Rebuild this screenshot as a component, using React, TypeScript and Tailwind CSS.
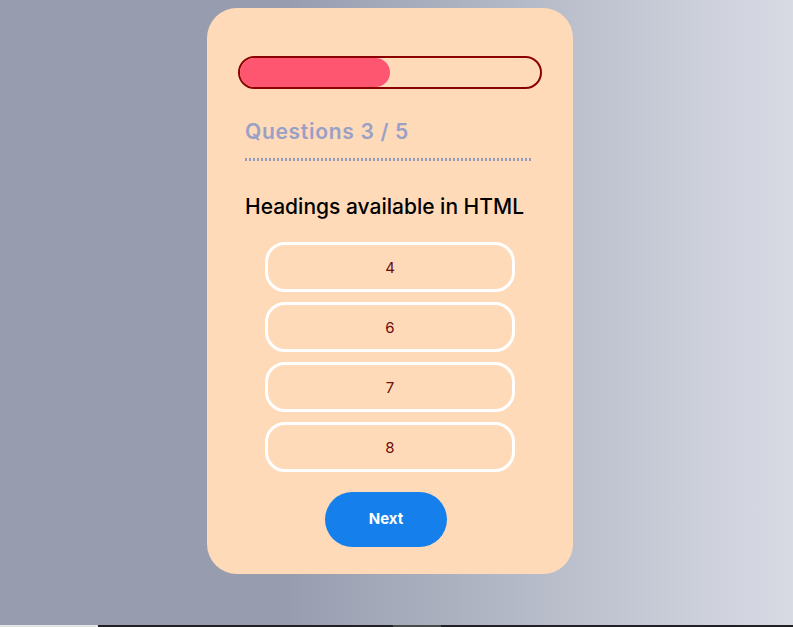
import React from "react";

const options = ["4", "6", "7", "8"];

export default function App() {
  return (
    <div className="flex h-[627px] w-[793px] flex-col overflow-hidden" style={{ fontFamily: "Inter, 'Open Sans', sans-serif" }}>
      <div className="h-[625px] w-full bg-[linear-gradient(to_right,#979daf_36%,#d8dbe4_100%)]">
        <div className="flex w-[780px] justify-center pt-2">
          <div className="flex h-[566px] w-[366px] flex-col rounded-[30px] bg-[#ffdab9] px-[31px] pt-[48px]">
            <div className="h-[33px] w-full rounded-full border-2 border-[#8b0000]">
              <div className="h-full w-[150px] rounded-full bg-[#fe5570]" />
            </div>
            <div className="ml-[7px] mt-[30px] w-[286px]">
              <div className="pb-[13px] text-[21px] font-semibold leading-[26px] tracking-[0.7px] text-[#98a0c6]">
                Questions 3 / 5
              </div>
              <div className="h-[3px] w-[286px] bg-[repeating-linear-gradient(to_right,#929bc2_0px,#929bc2_2px,transparent_2px,transparent_4px)]" />
            </div>
            <div className="ml-[7px] mt-[33px] text-[21px] font-medium leading-[26px] text-black">
              Headings available in HTML
            </div>
            <div className="mt-[22px] flex flex-col items-center gap-[10px]">
              {options.map((o) => (
                <button
                  key={o}
                  className="flex h-[50px] w-[250px] items-center justify-center rounded-[20px] border-[3px] border-white pt-[2px] text-[15px] text-[#6e0b0b]"
                >
                  {o}
                </button>
              ))}
            </div>
            <button className="ml-[87px] mt-[20px] flex h-[55px] w-[122px] items-center justify-center rounded-full bg-[#1580eb] text-[15px] font-bold text-white">
              Next
            </button>
          </div>
        </div>
      </div>
      <div className="flex h-[2px] w-full">
        <div className="w-[98px] bg-[#e4e4e4]" />
        <div className="w-[295px] bg-[#202124]" />
        <div className="w-[48px] bg-[#4a4a4a]" />
        <div className="flex-1 bg-[#202124]" />
      </div>
    </div>
  );
}
